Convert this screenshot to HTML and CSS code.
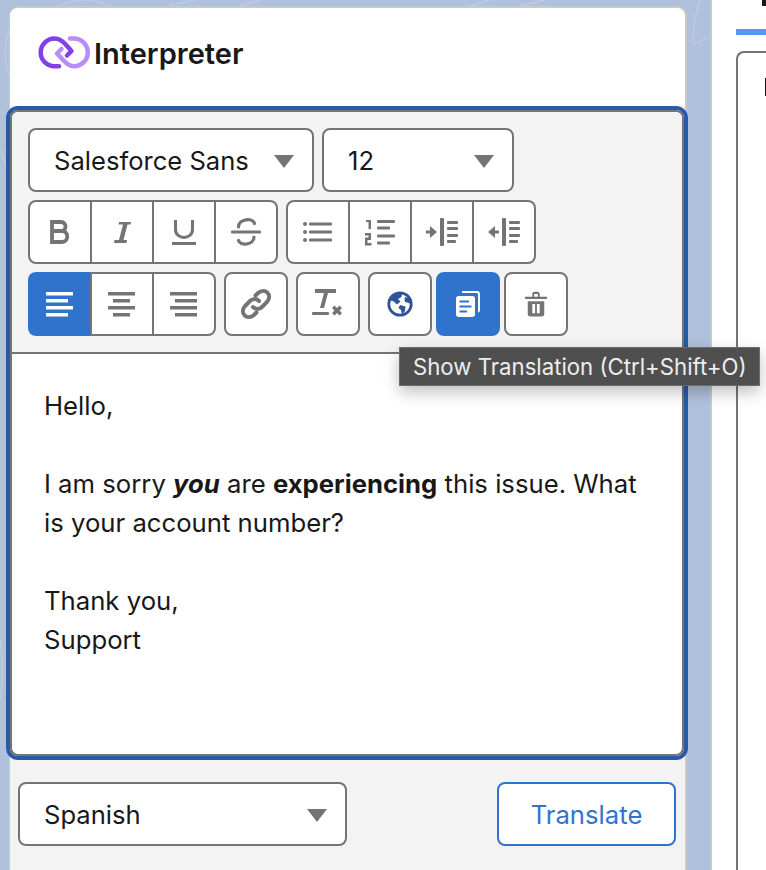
FILE: index.html
```html
<!DOCTYPE html>
<html lang="en">
<head>
    <meta charset="UTF-8">
    <title>Interpreter</title>
    <link rel="stylesheet" href="styles.css">
</head>
<body>
    <div class="page">
        <svg class="backdrop" width="766" height="870" viewBox="0 0 766 870" fill="none" stroke="#c3d0e5" stroke-width="1">
            <path d="M60 6C75 -2 95 -2 110 6M170 5L195 0M240 6L260 0M470 6L490 0M520 6L545 0M700 0C695 15 692 30 694 44C698 42 704 40 710 36"/>
            <path d="M9 30C4 45 4 60 9 75M0 150L6 165M0 640C3 660 3 680 0 700"/>
        </svg>

        <section class="panel">
            <header class="panel-header">
                <svg class="logo" width="56" height="36" viewBox="6 6 56 36" fill="none" stroke-width="4.500" stroke-linecap="round" stroke-linejoin="round">
                    <path d="M40 10.600H44A13.800 13.800 0 1 1 44 38.200C38 38.200 35 34 27 25.500L31.500 21" stroke="#b98cf8"/>
                    <path d="M29 38.200H24.500A13.800 13.800 0 1 1 24.500 10.600C31 10.600 34 14.500 41.500 23L37 27.500" stroke="#8240e6"/>
                </svg>
                <h1 class="panel-title">Interpreter</h1>
            </header>

            <div class="editor-outer">
                <div class="editor">
                    <div class="toolbar">
                        <div class="toolbar-row">
                            <div class="select select-font">Salesforce Sans</div>
                            <div class="select select-size">12</div>
                        </div>
                        <div class="toolbar-row">
                            <div class="btn-group">
                                <button class="tool"><svg width="20" height="24" viewBox="0 0 20 24" fill="none" stroke="#747474" stroke-width="3.800"><path d="M2 2H11C17 2 17 11 11 11H2M2 11H12C19 11 19 22 12 22H2V0"/></svg></button>
                                <button class="tool"><svg width="17" height="21" viewBox="0 0 17 21" fill="#747474"><path d="M5 0H17L16.500 2.500H13.500L9.500 18H13L12.500 21H0L.5 18H5L9 2.500H4.500Z"/></svg></button>
                                <button class="tool"><svg width="24" height="25" viewBox="0 0 24 25" fill="none" stroke="#747474" stroke-width="3"><path d="M3.500 0V9.500C3.500 20 20.500 20 20.500 9.500V0M0 23.500H24"/></svg></button>
                                <button class="tool"><svg width="30" height="30" viewBox="0 0 30 30" fill="none" stroke="#747474" stroke-width="3.200" stroke-linecap="round"><path d="M1.500 15H28.500M7.500 10C7.500 1.500 22 .5 23.500 6.500M23 20C23 28.500 9 29 7.500 23.500"/></svg></button>
                            </div>
                            <div class="btn-group">
                                <button class="tool"><svg width="30" height="22" viewBox="0 0 30 22" fill="#747474"><circle cx="2" cy="3" r="2"/><circle cx="2" cy="11" r="2"/><circle cx="2" cy="19" r="2"/><rect x="6" y="1.500" width="23" height="3" rx="1"/><rect x="6" y="9.500" width="23" height="3" rx="1"/><rect x="6" y="17.500" width="23" height="3" rx="1"/></svg></button>
                                <button class="tool"><svg width="30" height="27" viewBox="0 0 30 27" fill="#747474"><path d="M1 1H6V10H3.500V3H1ZM0 14H6V21H2.500V24H6.500V26.500H0V18.500H3.500V16.500H0Z"/><rect x="12" y="1" width="18" height="3" rx="1"/><rect x="12" y="7.500" width="13" height="3" rx="1"/><rect x="12" y="15.500" width="18" height="3" rx="1"/><rect x="12" y="22.500" width="13" height="3" rx="1"/></svg></button>
                                <button class="tool"><svg width="32" height="28" viewBox="0 0 32 28" fill="#747474"><path d="M0 12.500H4V8L11 14L4 20V15.500H0Z"/><rect x="14" y="0" width="4" height="28" rx="1"/><rect x="21" y="3" width="11" height="3" rx="1"/><rect x="21" y="9" width="11" height="3" rx="1"/><rect x="21" y="16" width="11" height="3" rx="1"/><rect x="21" y="22" width="9" height="3" rx="1"/></svg></button>
                                <button class="tool"><svg width="32" height="28" viewBox="0 0 32 28" fill="#747474"><path d="M11 12.500H7V8L0 14L7 20V15.500H11Z"/><rect x="14" y="0" width="4" height="28" rx="1"/><rect x="21" y="3" width="11" height="3" rx="1"/><rect x="21" y="9" width="11" height="3" rx="1"/><rect x="21" y="16" width="11" height="3" rx="1"/><rect x="21" y="22" width="9" height="3" rx="1"/></svg></button>
                            </div>
                        </div>
                        <div class="toolbar-row">
                            <div class="btn-group">
                                <button class="tool tool-active"><svg width="28" height="26" viewBox="0 0 28 26" fill="#fff"><rect y="1" width="27" height="3.500"/><rect y="8" width="22" height="3.500"/><rect y="15" width="27" height="3.500"/><rect y="22" width="22" height="3.500"/></svg></button>
                                <button class="tool"><svg width="28" height="26" viewBox="0 0 28 26" fill="#747474"><rect y="1" width="27" height="3.500"/><rect x="5" y="8" width="17" height="3.500"/><rect y="15" width="27" height="3.500"/><rect x="5" y="22" width="17" height="3.500"/></svg></button>
                                <button class="tool"><svg width="28" height="26" viewBox="0 0 28 26" fill="#747474"><rect y="1" width="27" height="3.500"/><rect x="5" y="8" width="22" height="3.500"/><rect y="15" width="27" height="3.500"/><rect x="5" y="22" width="22" height="3.500"/></svg></button>
                            </div>
                            <button class="tool-single"><svg width="32" height="32" viewBox="0 0 32 32" fill="none" stroke="#747474" stroke-width="4" stroke-linecap="round"><path d="M13 19C16 22 20 21 22 19L27 14C33 7 25 -1 18 5L15.500 7.500M19 13C16 10 12 11 10 13L5 18C-1 25 7 33 14 27L16.500 24.500"/></svg></button>
                            <button class="tool-single"><svg width="32" height="30" viewBox="0 0 32 30" fill="#747474"><path d="M3 0H24V4H16L12 19H8L12 4H3Z"/><rect y="23" width="17" height="3" rx="1"/><path d="M20 19L22.500 16.500L25 19L27.500 16.500L30 19L27.500 21.500L30 24L27.500 26.500L25 24L22.500 26.500L20 24L22.500 21.500Z"/></svg></button>
                            <div class="tool-set">
                                <button class="tool-single"><svg width="26" height="26" viewBox="0 0 26 26"><circle cx="13" cy="13" r="11.200" fill="#fff" stroke="#2f5497" stroke-width="2.800"/><path d="M7 3L15 2.500L14.500 6L11 8L13.500 10.500L10 13.500L6 10L3 9.500ZM13 14L18.500 15.500L18 20L15 23.500L14 19L11.500 17ZM18 6L23 7.500L24 13L20.500 11.500L18 11L17.500 9Z" fill="#2f5497"/></svg></button>
                                <button class="tool-single tool-single-active"><svg width="24" height="26" viewBox="0 0 24 26" fill="#fff"><path d="M6 0H21C22.800 0 24 1.200 24 3V19C24 20.500 23.200 21.500 22 21.500V3.500C22 2.500 21.500 2 20.500 2H6Z"/><path d="M2.500 5H16.500C18 5 19 6 19 7.500V23.500C19 25 18 26 16.500 26H2.500C1 26 0 25 0 23.500V7.500C0 6 1 5 2.500 5Z"/><path d="M3.500 10.500H13M3.500 15.500H15.500M3.500 20.500H11" stroke="#3073cd" stroke-width="2" fill="none"/></svg></button>
                                <button class="tool-single"><svg width="22" height="26" viewBox="0 0 24 28" fill="#747474"><path d="M0 6H24V8.500H0ZM8 6V3C8 1.500 9 .5 10.500 .5H13.500C15 .5 16 1.500 16 3V6H14V3H10V6Z"/><path d="M3 11H21V24.500C21 26.500 20 27.500 18 27.500H6C4 27.500 3 26.500 3 24.500ZM8 14V24H11V14ZM13 14V24H16V14Z" fill-rule="evenodd"/></svg></button>
                            </div>
                        </div>
                    </div>
                    <div class="editor-body">
                        <p>Hello,</p>
                        <p>I am sorry <b><i>you</i></b> are <b>experiencing</b> this issue. What is your account number?</p>
                        <p>Thank you,<br>Support</p>
                    </div>
                    <div class="tooltip">Show Translation (Ctrl+Shift+O)</div>
                </div>
            </div>

            <footer class="panel-footer">
                <div class="select select-lang">Spanish</div>
                <button class="translate-button">Translate</button>
            </footer>
        </section>

        <aside class="side">
            <span class="side-mark side-mark-top"></span>
            <div class="side-tab"></div>
            <div class="side-box">
                <span class="side-mark side-mark-box"></span>
            </div>
        </aside>
    </div>
</body>
</html>
```

FILE: styles.css
```css
* {
    margin: 0;
    padding: 0;
    box-sizing: border-box;
    font-family: "Inter", "Liberation Sans", sans-serif;
}

body {
    background-color: #b0c1dc;
    height: 870px;
    overflow: hidden;
}

.page {
    position: relative;
    display: flex;
    justify-content: space-between;
    height: 870px;
    padding: 6px 0 0 9px;
}

.backdrop {
    position: absolute;
    left: 0;
    top: 0;
}

/* Left panel */
.panel {
    position: relative;
    z-index: 2;
    width: 678px;
    background: #f3f3f3;
    border: 2px solid #c9c9c9;
    border-bottom: none;
    border-left-width: 1px;
    border-radius: 10px 10px 0 0;
}

.panel-header {
    display: flex;
    align-items: center;
    gap: 2px;
    height: 98px;
    padding: 0 0 8px 26px;
    background: white;
    border-radius: 8px 8px 0 0;
}

.logo {
    margin-top: -2px;
}

.panel-title {
    font-size: 29px;
    font-weight: 600;
    color: #181818;
}

/* Editor */
.editor-outer {
    margin: 0 -3px 0 -4px;
    border: 4px solid #2a5aa6;
    border-radius: 12px;
}

.editor {
    position: relative;
    height: 646px;
    background: white;
    border: 2px solid #747474;
    border-radius: 8px;
}

.toolbar {
    display: flex;
    flex-direction: column;
    gap: 8px;
    height: 242px;
    padding: 16px 16px 0;
    background: #f3f3f3;
    border-bottom: 2px solid #747474;
    border-radius: 6px 6px 0 0;
}

.toolbar-row {
    display: flex;
    gap: 8px;
}

.select {
    position: relative;
    display: flex;
    align-items: center;
    height: 64px;
    padding-left: 24px;
    font-size: 25.600px;
    color: #181818;
    background: white;
    border: 2px solid #747474;
    border-radius: 8px;
}

.select::after {
    content: "";
    position: absolute;
    right: 18px;
    top: 25px;
    border-left: 10px solid transparent;
    border-right: 10px solid transparent;
    border-top: 13px solid #747474;
}

.select-font {
    width: 286px;
}

.select-size {
    width: 192px;
}

.select-lang {
    width: 329px;
}

.btn-group {
    display: flex;
    height: 64px;
}

.tool {
    display: flex;
    align-items: center;
    justify-content: center;
    width: 62px;
    height: 64px;
    background: white;
    border: 2px solid #747474;
    border-left: none;
}

.tool:first-child {
    width: 64px;
    border-left: 2px solid #747474;
    border-radius: 8px 0 0 8px;
}

.tool:last-child {
    border-radius: 0 8px 8px 0;
}

.tool-active,
.tool-active:first-child {
    background: #3073cd;
    border-color: #3073cd #747474 #3073cd #3073cd;
}

.tool-set {
    display: flex;
    gap: 4px;
}

.tool-single {
    display: flex;
    align-items: center;
    justify-content: center;
    width: 64px;
    height: 64px;
    background: white;
    border: 2px solid #747474;
    border-radius: 8px;
}

.tool-single-active {
    background: #3073cd;
    border-color: #3073cd;
}

.editor-body {
    padding: 32px 32px 0;
    font-size: 25.700px;
    line-height: 39px;
    color: #181818;
}

.editor-body p {
    margin-bottom: 39px;
}

.tooltip {
    position: absolute;
    left: 387px;
    top: 235px;
    width: 361px;
    height: 39px;
    padding-left: 13px;
    line-height: 37px;
    font-size: 22.200px;
    white-space: nowrap;
    color: #ededed;
    background: #4f4f4f;
    border: 1px solid #6c6c6c;
    box-shadow: 0 6px 16px rgba(0, 0, 0, 0.25);
}

/* Footer */
.panel-footer {
    display: flex;
    justify-content: space-between;
    padding: 22px 9px 0 8px;
}

.translate-button {
    width: 179px;
    height: 64px;
    font-size: 25.700px;
    color: #3073cd;
    background: white;
    border: 2px solid #3073cd;
    border-radius: 8px;
}

/* Right column */
.side {
    position: relative;
    width: 56px;
    margin-top: -6px;
    padding: 29px 0 0 24px;
    background: white;
    border-left: 2px solid #c9c9c9;
}

.side-tab {
    height: 6px;
    background: #5b95f5;
}

.side-box {
    height: 840px;
    margin-top: 16px;
    padding: 25px 0 0 27px;
    border: 2px solid #747474;
    border-right: none;
    border-radius: 8px 0 0 0;
}

.side-mark {
    display: block;
    background: #181818;
}

.side-mark-top {
    position: absolute;
    right: 0;
    top: 0;
    width: 4px;
    height: 6px;
}

.side-mark-box {
    width: 2px;
    height: 18px;
}
```
